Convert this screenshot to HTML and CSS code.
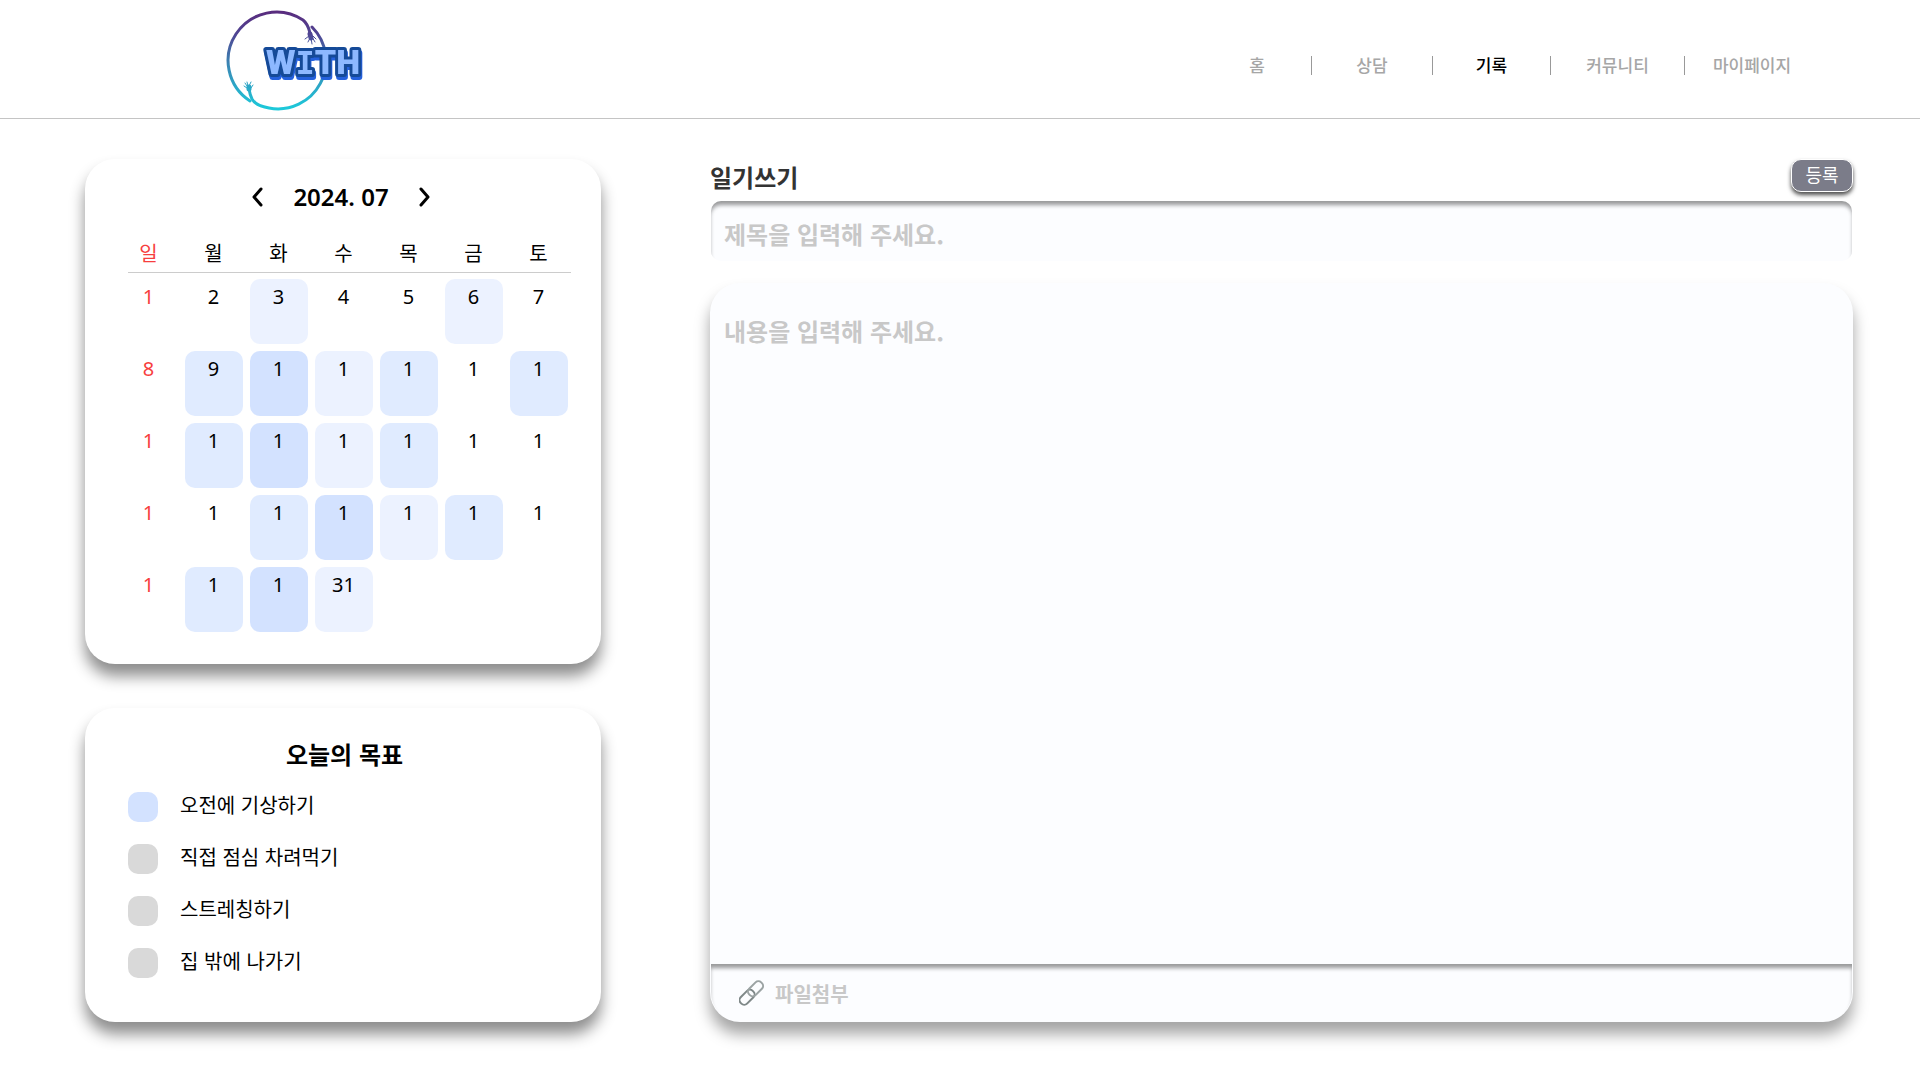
FILE: index.html
```html
<!DOCTYPE html>
<html lang="ko">
<head>
<meta charset="utf-8">
<meta name="viewport" content="width=device-width, initial-scale=1">
<title>WITH - 기록</title>
<link rel="stylesheet" href="styles.css">
</head>
<body>
<header class="site-header">
  <a class="logo" href="#" aria-label="WITH">
    <svg width="170" height="118" viewBox="0 0 170 118">
      <defs>
        <linearGradient id="ring" gradientUnits="userSpaceOnUse" x1="0" y1="10" x2="0" y2="109">
          <stop offset="0" stop-color="#5a2a7c"/>
          <stop offset="0.25" stop-color="#4f4694"/>
          <stop offset="0.55" stop-color="#3a86b4"/>
          <stop offset="1" stop-color="#1cc9da"/>
        </linearGradient>
      </defs>
      <g fill="none" stroke="url(#ring)" stroke-width="3" stroke-linecap="round">
        <path d="M40 101A48 48 0 1 1 93 20Q98 24 100 33"/>
        <path d="M102 27A48 48 0 0 1 59 108Q46 106 42 99Q40 95 39 89"/>
      </g>
      <g fill="none" stroke="url(#ring)" stroke-width="1" stroke-linecap="round">
        <path stroke-width="5" d="M100 34l1 4M39 89v-2"/>
        <path d="M99 36l-4 3M100 38l-2 4M101 38l1 6M102 37l3 5M103 36l3 3M37 88l-3-2M37 86l-2-3M38 86l-1-4M39 86l2-4M41 88l2-3"/>
      </g>
      <text class="logo-text" x="56" y="74">W<tspan class="logo-slab">I</tspan>TH</text>
    </svg>
  </a>
  <nav class="main-nav" aria-label="주 메뉴">
    <a href="#">홈</a>
    <a href="#">상담</a>
    <a href="#" class="active" aria-current="page">기록</a>
    <a href="#">커뮤니티</a>
    <a href="#">마이페이지</a>
  </nav>
</header>

<main class="page">
  <aside class="sidebar">
    <section class="card calendar" aria-label="달력">
      <div class="month-bar">
        <button type="button" class="month-button" aria-label="이전 달">
          <svg width="12" height="20" viewBox="0 0 12 20"><path d="M10 2L3 10l7 8"/></svg>
        </button>
        <h2 class="month">2024. 07</h2>
        <button type="button" class="month-button" aria-label="다음 달">
          <svg width="12" height="20" viewBox="0 0 12 20"><path d="M2 2l7 8-7 8"/></svg>
        </button>
      </div>
      <table class="days">
        <thead>
          <tr><th scope="col">일</th><th scope="col">월</th><th scope="col">화</th><th scope="col">수</th><th scope="col">목</th><th scope="col">금</th><th scope="col">토</th></tr>
        </thead>
        <tbody>
          <tr><td><span class="day">1</span></td><td><span class="day">2</span></td><td><span class="day low">3</span></td><td><span class="day">4</span></td><td><span class="day">5</span></td><td><span class="day low">6</span></td><td><span class="day">7</span></td></tr>
          <tr><td><span class="day">8</span></td><td><span class="day mid">9</span></td><td><span class="day high">1</span></td><td><span class="day low">1</span></td><td><span class="day mid">1</span></td><td><span class="day">1</span></td><td><span class="day mid">1</span></td></tr>
          <tr><td><span class="day">1</span></td><td><span class="day mid">1</span></td><td><span class="day high">1</span></td><td><span class="day low">1</span></td><td><span class="day mid">1</span></td><td><span class="day">1</span></td><td><span class="day">1</span></td></tr>
          <tr><td><span class="day">1</span></td><td><span class="day">1</span></td><td><span class="day mid">1</span></td><td><span class="day high">1</span></td><td><span class="day low">1</span></td><td><span class="day mid">1</span></td><td><span class="day">1</span></td></tr>
          <tr><td><span class="day">1</span></td><td><span class="day mid">1</span></td><td><span class="day high">1</span></td><td><span class="day low">31</span></td><td></td><td></td><td></td></tr>
        </tbody>
      </table>
    </section>

    <section class="card goals">
      <h2 class="goals-title">오늘의 목표</h2>
      <ul class="goal-list">
        <li><label class="goal"><input type="checkbox" checked><span>오전에 기상하기</span></label></li>
        <li><label class="goal"><input type="checkbox"><span>직접 점심 차려먹기</span></label></li>
        <li><label class="goal"><input type="checkbox"><span>스트레칭하기</span></label></li>
        <li><label class="goal"><input type="checkbox"><span>집 밖에 나가기</span></label></li>
      </ul>
    </section>
  </aside>

  <form class="diary">
    <div class="diary-head">
      <h1 class="diary-title">일기쓰기</h1>
      <button type="submit" class="submit">등록</button>
    </div>
    <input class="subject" type="text" placeholder="제목을 입력해 주세요." aria-label="제목">
    <div class="editor">
      <textarea class="content" placeholder="내용을 입력해 주세요." aria-label="내용"></textarea>
      <div class="attach-bar">
        <button type="button" class="attach">
          <svg width="26" height="26" viewBox="0 0 26 26" aria-hidden="true">
            <g fill="none" stroke-width="2" transform="rotate(-45 13 13)">
              <rect x="-2" y="8" width="17" height="9" rx="4" stroke="#7f8888"/>
              <rect x="10" y="8" width="17" height="9" rx="4" stroke="#9ba3a3"/>
            </g>
          </svg>
          <span>파일첨부</span>
        </button>
      </div>
    </div>
  </form>
</main>
</body>
</html>
```
FILE: styles.css
```css
* {
  box-sizing: border-box;
}

body {
  margin: 0;
  min-height: 100vh;
  display: flex;
  flex-direction: column;
  background: #fff;
  color: #000;
  font-family: "Noto Sans CJK KR", sans-serif;
  font-size: 20px;
  line-height: 28px;
}

h1,
h2 {
  margin: 0;
  font-size: 24px;
  line-height: 32px;
}

button,
input,
textarea {
  margin: 0;
  border: 0;
  font-family: inherit;
}

button {
  padding: 0;
  background: none;
  cursor: pointer;
}

/* Header */

.site-header {
  display: flex;
  justify-content: space-between;
  align-items: flex-start;
  padding: 0 101px 0 210px;
  border-bottom: 1px solid #c4c4c4;
}

.logo svg {
  display: block;
}

.logo-text {
  font-family: Roboto, sans-serif;
  font-size: 34px;
  font-weight: 900;
  fill: #8db8ff;
  stroke: #154a98;
  stroke-width: 6px;
  stroke-linejoin: round;
  paint-order: stroke;
  filter: drop-shadow(1px 3px 0 #2460dc);
}

.logo-slab {
  font-family: "DejaVu Sans Mono", monospace;
  font-size: 32px;
  font-weight: 700;
}

.main-nav {
  display: grid;
  grid-template-columns: 108px 121px 118px 134px 135px;
  padding-top: 56px;
}

.main-nav a {
  padding-bottom: 2px;
  color: #a6a6a6;
  font-size: 17px;
  font-weight: 500;
  line-height: 17px;
  text-align: center;
  text-decoration: none;
}

.main-nav a + a {
  border-left: 1px solid #999;
}

.main-nav .active {
  color: #000;
}

/* Page columns */

.page {
  flex: 1;
  display: flex;
  gap: 109px;
  padding: 40px 67px 58px 85px;
}

.sidebar {
  flex: none;
  display: flex;
  flex-direction: column;
  gap: 44px;
  width: 516px;
}

.card {
  padding: 22px 30px 31px 43px;
  border-radius: 30px;
  background: #fff;
  box-shadow: 0 12px 15px rgba(0, 0, 0, 0.45);
}

/* Calendar */

.month-bar {
  display: flex;
  justify-content: center;
  align-items: center;
  gap: 30px;
  padding-right: 17px;
}

.month,
.days td {
  font-family: "Noto Sans", sans-serif;
}

.month {
  font-weight: 600;
}

.month-button {
  display: flex;
}

.month-button path {
  fill: none;
  stroke: #000;
  stroke-width: 3;
  stroke-linecap: round;
  stroke-linejoin: round;
}

.days {
  width: 100%;
  margin-top: 20px;
  border-spacing: 0;
  table-layout: fixed;
}

.days th {
  width: 65px;
  height: 40px;
  padding: 1px 0 0;
  border-bottom: 1px solid #ccc;
  font-weight: 400;
}

.days th:first-child {
  width: 53px;
}

.days td {
  height: 72px;
  padding: 6px 0 1px;
  text-align: center;
}

.days th:first-child,
.days td:first-child {
  padding-right: 12px;
  color: #f73e3e;
}

.day {
  display: block;
  width: 58px;
  height: 65px;
  margin: 0 auto;
  padding-top: 4px;
  border-radius: 10px;
}

.days td:first-child .day {
  width: auto;
}

.low {
  background: #ecf2ff;
}

.mid {
  background: #e0ebff;
}

.high {
  background: #d3e2ff;
}

/* Goals */

.goals {
  flex: 1;
}

.goals-title {
  padding: 8px 10px 0 0;
  text-align: center;
}

.goal-list {
  display: flex;
  flex-direction: column;
  gap: 22px;
  margin: 22px 0 0;
  padding: 0;
  list-style: none;
}

.goal {
  display: flex;
  gap: 22px;
  line-height: 26px;
}

.goal input {
  appearance: none;
  flex: none;
  width: 30px;
  height: 30px;
  border-radius: 10px;
  background: #d9d9d9;
}

.goal input:checked {
  background: #d3e2ff;
}

/* Diary form */

.diary {
  flex: 1;
  min-width: 0;
  display: flex;
  flex-direction: column;
}

.diary-head {
  display: flex;
  justify-content: space-between;
  align-items: flex-start;
  height: 42px;
}

.diary-title {
  padding-top: 2px;
  color: #333;
}

.submit {
  width: 62px;
  height: 33px;
  padding-bottom: 3px;
  border: 1px solid #fff;
  border-radius: 10px;
  background: #7b7c89;
  box-shadow: 0 3px 4px rgba(0, 0, 0, 0.7);
  color: #fff;
  font-size: 18px;
  line-height: 24px;
}

.subject {
  height: 60px;
  margin: 0 1px;
  padding: 4px 13px 0;
  border-radius: 10px;
  background: #fcfdff;
  box-shadow: inset 0 5px 4px -1px rgba(0, 0, 0, 0.4);
  font-size: 24px;
  font-weight: 700;
}

.subject::placeholder,
.content::placeholder {
  color: #c8c8c8;
  opacity: 1;
}

.editor {
  flex: 1;
  display: flex;
  flex-direction: column;
  margin-top: 22px;
  border-radius: 30px;
  background: #fcfdff;
  box-shadow: 0 12px 15px rgba(0, 0, 0, 0.36);
}

.content {
  flex: 1;
  padding: 32px 14px;
  background: transparent;
  font-size: 24px;
  font-weight: 700;
  line-height: 32px;
  resize: none;
}

.attach-bar {
  display: flex;
  align-items: center;
  height: 58px;
  margin: 0 1px;
  padding: 0 28px;
  border-radius: 0 0 30px 30px;
  box-shadow: inset 0 5px 4px -1px rgba(0, 0, 0, 0.4);
}

.attach {
  display: flex;
  align-items: center;
  gap: 10px;
  color: #c8c8c8;
  font-size: 20px;
  font-weight: 700;
}
```
